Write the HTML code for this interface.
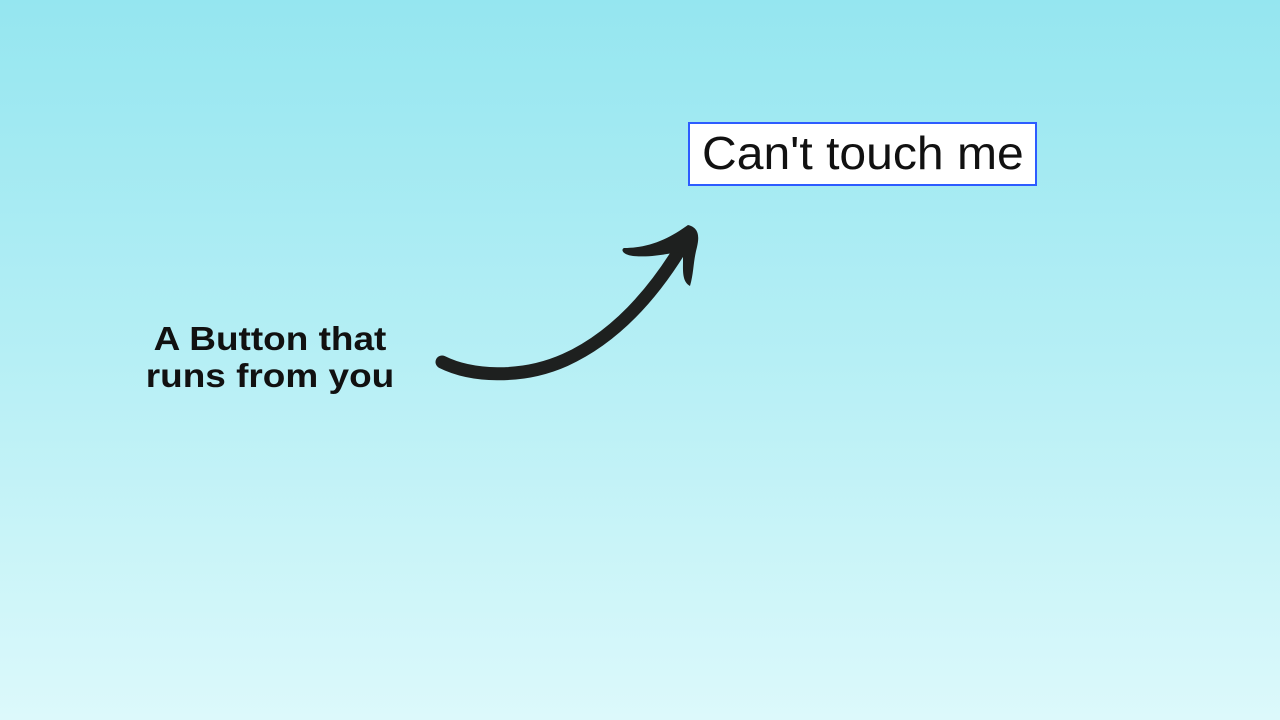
<!DOCTYPE html>
<html><head><style>
html,body{margin:0;padding:0}
body{width:1280px;height:720px;overflow:hidden;position:relative;background:linear-gradient(to bottom,#95e6f0 0%,#b6eff5 50%,#dcf9fb 100%);font-family:"Liberation Sans",sans-serif}
.btn{position:absolute;left:688px;top:122px;width:345px;height:60px;border:2.5px solid #2d5cff;background:#fff;box-sizing:content-box}
.btn span{position:absolute;left:12px;top:2px;font-size:46px;color:#111;white-space:nowrap;transform:scaleX(1.045);transform-origin:left}
.lbl{position:absolute;left:70px;top:320px;width:400px;text-align:center;font-weight:bold;font-size:33px;line-height:37px;color:#111;transform:scaleX(1.12);transform-origin:center}
</style></head><body>
<div class="btn"><span>Can't touch me</span></div>
<div class="lbl">A Button that<br>runs from you</div>
<svg width="1280" height="720" style="position:absolute;left:0;top:0">
<path d="M442 362 C470 376 520 380 565 360 C620 335 660 285 688 236" fill="none" stroke="#1e201f" stroke-width="13" stroke-linecap="round"/>
<path d="M624 248 C650 248 670 238 688 225 C700 228 699 238 697 247 C693 262 694 272 690 286 C682 282 683 270 683 262 L683 252 C672 252 655 258 633 256 C624 255 620 250 624 248 Z" fill="#1e201f"/>
</svg>
</body></html>
